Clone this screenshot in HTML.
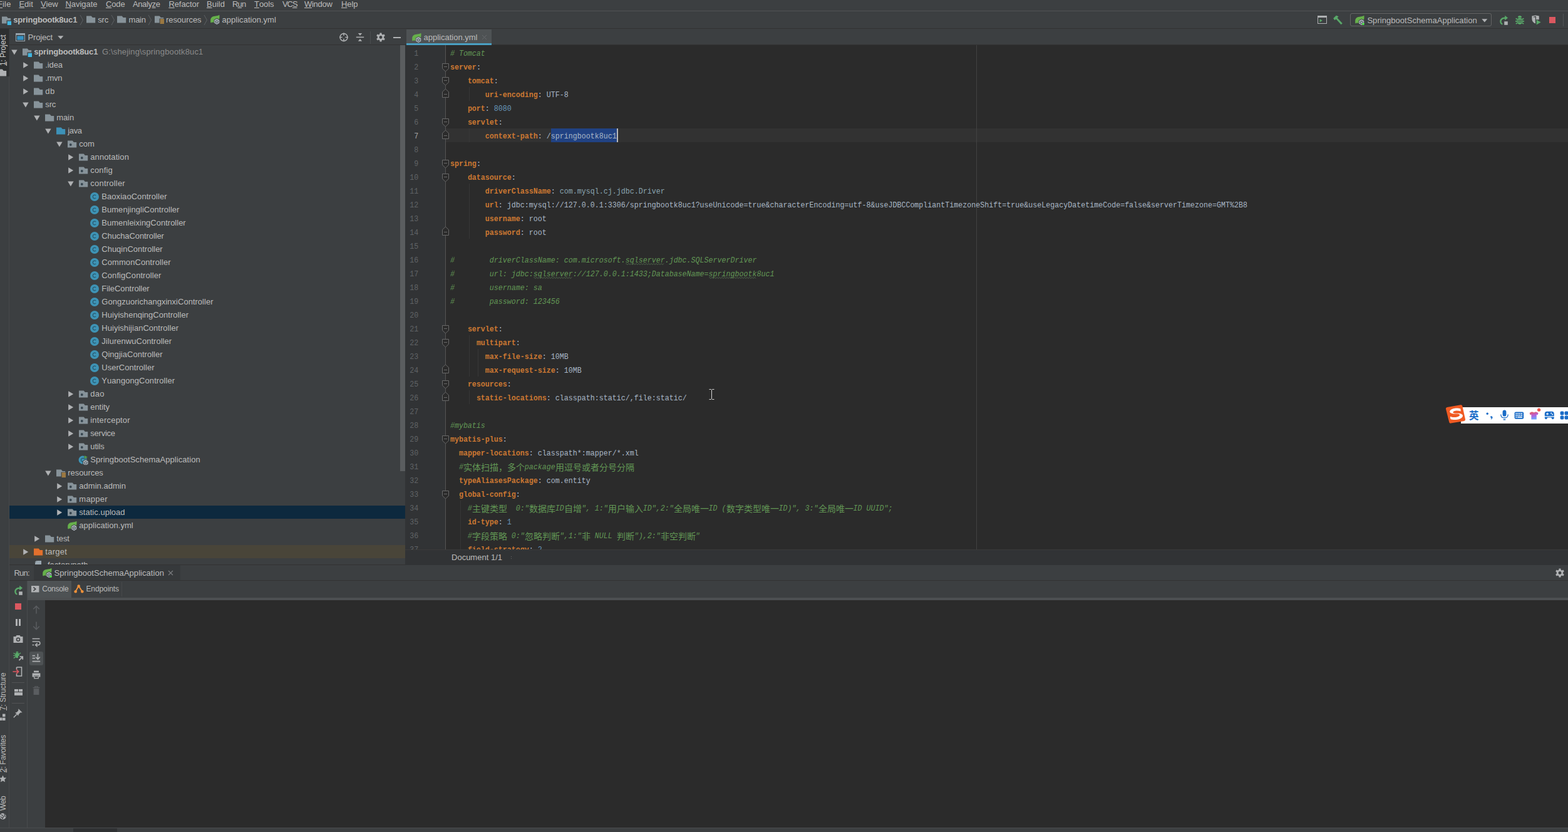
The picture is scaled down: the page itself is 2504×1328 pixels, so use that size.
<!DOCTYPE html>
<html><head><meta charset="utf-8"><title>application.yml</title><style>
html,body{margin:0;padding:0}
body{width:2504px;height:1328px;overflow:hidden;background:#2b2b2b;position:relative;font-family:"Liberation Sans",sans-serif;font-kerning:none;-webkit-font-smoothing:antialiased}
#root{position:absolute;left:0;top:0;width:2504px;height:1328px;overflow:hidden}
.r{position:absolute;display:block}
.t{position:absolute;white-space:pre;font-family:"Liberation Sans",sans-serif;color:#bbbbbb}
.t u{text-decoration:underline;text-underline-offset:1px}
.cl,.ln{position:absolute;white-space:pre;font-family:"Liberation Mono",monospace;font-size:11.665px;line-height:19.0096px;height:19.0096px;transform-origin:0 0;color:#a9b7c6}
.ln{color:#606366}
.k{color:#cc7832;font-weight:700}
.v{color:#a9b7c6}
.n{color:#6897bb}
.r2{color:#8aa4af}
.c{color:#629755;font-style:italic}
</style></head>
<body><div id="root">
<div class="r" style="left:0px;top:0px;width:2504px;height:46px;background:#3c3f41;"></div>
<div class="r" style="left:0px;top:17px;width:2504px;height:1px;background:#515355;"></div>
<div class="r" style="left:0px;top:45px;width:2504px;height:1px;background:#323232;"></div>
<span class="t" style="left:-4.00px;top:-2px;font-size:13px;line-height:17px;color:#bbbbbb;letter-spacing:0.137px;"><u>F</u>ile</span>
<span class="t" style="left:30.40px;top:-2px;font-size:13px;line-height:17px;color:#bbbbbb;letter-spacing:0.023px;"><u>E</u>dit</span>
<span class="t" style="left:65.00px;top:-2px;font-size:13px;line-height:17px;color:#bbbbbb;letter-spacing:-0.172px;"><u>V</u>iew</span>
<span class="t" style="left:104.40px;top:-2px;font-size:13px;line-height:17px;color:#bbbbbb;letter-spacing:-0.014px;"><u>N</u>avigate</span>
<span class="t" style="left:169.00px;top:-2px;font-size:13px;line-height:17px;color:#bbbbbb;letter-spacing:-0.145px;"><u>C</u>ode</span>
<span class="t" style="left:212.00px;top:-2px;font-size:13px;line-height:17px;color:#bbbbbb;letter-spacing:-0.393px;">Analy<u>z</u>e</span>
<span class="t" style="left:269.40px;top:-2px;font-size:13px;line-height:17px;color:#bbbbbb;letter-spacing:-0.080px;"><u>R</u>efactor</span>
<span class="t" style="left:330.00px;top:-2px;font-size:13px;line-height:17px;color:#bbbbbb;letter-spacing:0.016px;"><u>B</u>uild</span>
<span class="t" style="left:371.00px;top:-2px;font-size:13px;line-height:17px;color:#bbbbbb;letter-spacing:-0.786px;">R<u>u</u>n</span>
<span class="t" style="left:406.00px;top:-2px;font-size:13px;line-height:17px;color:#bbbbbb;letter-spacing:-0.059px;"><u>T</u>ools</span>
<span class="t" style="left:451.00px;top:-2px;font-size:13px;line-height:17px;color:#bbbbbb;letter-spacing:-1.078px;">VC<u>S</u></span>
<span class="t" style="left:486.00px;top:-2px;font-size:13px;line-height:17px;color:#bbbbbb;letter-spacing:-0.292px;"><u>W</u>indow</span>
<span class="t" style="left:545.00px;top:-2px;font-size:13px;line-height:17px;color:#bbbbbb;letter-spacing:-0.062px;"><u>H</u>elp</span>
<svg class="r" style="left:2px;top:24px;" width="16" height="16" viewBox="0 0 16 16"><path d="M1 2.5H8.7L10.8 5H15.2V13.5H1Z" fill="#87939a"/><rect x="8.5" y="8.5" width="8" height="8" fill="#3c3f41"/><rect x="9.7" y="9.7" width="6.3" height="6.3" fill="#40b6e0"/></svg>
<span class="t" style="left:21.30px;top:23px;font-size:13px;line-height:17px;color:#bbbbbb;font-weight:700;letter-spacing:-0.190px;">springbootk8uc1</span>
<svg class="r" style="left:127px;top:23px" width="7" height="18" viewBox="0 0 7 18"><path d="M1 1L5.5 9L1 17" fill="none" stroke="#5e6164" stroke-width="1"/></svg>
<svg class="r" style="left:136.5px;top:23px;" width="16" height="16" viewBox="0 0 16 16"><path d="M1 2.5H8.7L10.8 5H15.2V13.5H1Z" fill="#87939a"/></svg>
<span class="t" style="left:156.30px;top:23px;font-size:13px;line-height:17px;color:#bbbbbb;letter-spacing:-0.181px;">src</span>
<svg class="r" style="left:177px;top:23px" width="7" height="18" viewBox="0 0 7 18"><path d="M1 1L5.5 9L1 17" fill="none" stroke="#5e6164" stroke-width="1"/></svg>
<svg class="r" style="left:186px;top:23px;" width="16" height="16" viewBox="0 0 16 16"><path d="M1 2.5H8.7L10.8 5H15.2V13.5H1Z" fill="#87939a"/></svg>
<span class="t" style="left:205.60px;top:23px;font-size:13px;line-height:17px;color:#bbbbbb;letter-spacing:-0.297px;">main</span>
<svg class="r" style="left:236px;top:23px" width="7" height="18" viewBox="0 0 7 18"><path d="M1 1L5.5 9L1 17" fill="none" stroke="#5e6164" stroke-width="1"/></svg>
<svg class="r" style="left:246px;top:23px;" width="16" height="16" viewBox="0 0 16 16"><path d="M1 2.5H8.7L10.8 5H15.2V13.5H1Z" fill="#87939a"/><rect x="8.6" y="6.6" width="8" height="10" fill="#3c3f41"/><rect x="9.6" y="7.6" width="6.4" height="1.1" fill="#e8a842"/><rect x="9.6" y="9.6" width="6.4" height="1.1" fill="#e8a842"/><rect x="9.6" y="11.6" width="6.4" height="1.1" fill="#e8a842"/><rect x="9.6" y="13.6" width="6.4" height="1.1" fill="#e8a842"/></svg>
<span class="t" style="left:265.00px;top:23px;font-size:13px;line-height:17px;color:#bbbbbb;letter-spacing:-0.064px;">resources</span>
<svg class="r" style="left:325px;top:23px" width="7" height="18" viewBox="0 0 7 18"><path d="M1 1L5.5 9L1 17" fill="none" stroke="#5e6164" stroke-width="1"/></svg>
<svg class="r" style="left:334.7px;top:23px;" width="16" height="16" viewBox="0 0 16 16"><path d="M15.3 0.8C12 3 7.2 2.4 4.3 3.8C2.2 5 1.1 7.2 1.2 9.4L1.2 12.5L2.2 13.7C2.9 12.6 3.5 12.4 4.5 12.6C7.2 13.5 10.2 13.4 12.2 12C15 10 16.1 5 15.3 0.8Z" fill="#66b04b"/><path d="M11.30 5.90L16.06 8.65L16.06 14.15L11.30 16.90L6.54 14.15L6.54 8.65Z" fill="#3c3f41"/><path d="M11.30 6.90L15.20 9.15L15.20 13.65L11.30 15.90L7.40 13.65L7.40 9.15Z" fill="#b4bec6"/><path d="M9.8 9.9A2.2 2.2 0 1 0 12.8 9.9" fill="none" stroke="#434a50" stroke-width="1.1"/><path d="M11.3 8.7V11.6" stroke="#434a50" stroke-width="1.1"/></svg>
<span class="t" style="left:354.50px;top:23px;font-size:13px;line-height:17px;color:#bbbbbb;letter-spacing:0.027px;">application.yml</span>
<svg class="r" style="left:2104px;top:25px;" width="15" height="13" viewBox="0 0 15 13"><rect x="0.5" y="0.5" width="14" height="12" fill="none" stroke="#afb1b3"/><rect x="0.5" y="0.5" width="14" height="2.6" fill="#afb1b3"/><path d="M3.5 5.2L7.8 7.8L3.5 10.4Z" fill="#59a869"/></svg>
<svg class="r" style="left:2128px;top:24px;" width="17" height="16" viewBox="0 0 17 16"><path d="M1.2 5.2L5.8 0.8L9.6 2.2L7.6 4.4L15.8 13.2L13.6 15.2L5.6 6.4L3.4 8.2Z" fill="#59a869"/></svg>
<div class="r" style="left:2156px;top:21px;width:226px;height:21px;border:1px solid #646464;border-radius:3px;box-sizing:border-box"></div>
<svg class="r" style="left:2163px;top:24px;" width="16" height="16" viewBox="0 0 16 16"><path d="M15.3 0.8C12 3 7.2 2.4 4.3 3.8C2.2 5 1.1 7.2 1.2 9.4L1.2 12.5L2.2 13.7C2.9 12.6 3.5 12.4 4.5 12.6C7.2 13.5 10.2 13.4 12.2 12C15 10 16.1 5 15.3 0.8Z" fill="#66b04b"/><path d="M11.30 5.90L16.06 8.65L16.06 14.15L11.30 16.90L6.54 14.15L6.54 8.65Z" fill="#3c3f41"/><path d="M11.30 6.90L15.20 9.15L15.20 13.65L11.30 15.90L7.40 13.65L7.40 9.15Z" fill="#b4bec6"/><path d="M9.8 9.9A2.2 2.2 0 1 0 12.8 9.9" fill="none" stroke="#434a50" stroke-width="1.1"/><path d="M11.3 8.7V11.6" stroke="#434a50" stroke-width="1.1"/><circle cx="14" cy="14.2" r="1.8" fill="#4ff04a"/></svg>
<span class="t" style="left:2183.40px;top:24px;font-size:13px;line-height:17px;color:#bbbbbb;letter-spacing:0.045px;">SpringbootSchemaApplication</span>
<svg class="r" style="left:2366px;top:30px;" width="10" height="6" viewBox="0 0 10 6"><path d="M0.3 0.3H9.3L4.8 5.6Z" fill="#afb1b3"/></svg>
<svg class="r" style="left:2393px;top:24px;" width="16" height="16" viewBox="0 0 16 16"><path d="M10.2 0.8L15 4.6L10.2 8.4V5.9C7 5.7 4.6 7.4 4.6 10.2C4.6 12 5.6 13.3 7 14L5.8 15.6C3.6 14.6 2.2 12.7 2.2 10.2C2.2 6.2 5.6 3.4 10.2 3.4Z" fill="#59a869"/><rect x="9.2" y="10.2" width="5.6" height="5.6" fill="#afb1b3"/></svg>
<svg class="r" style="left:2418.5px;top:24px;" width="16" height="16" viewBox="0 0 16 16"><ellipse cx="8" cy="9.6" rx="4.5" ry="5.3" fill="#59a869"/><path d="M4.9 4A3.1 3.1 0 0 1 11.1 4Z" fill="#59a869"/><path d="M1.6 5.4L4.4 7M14.4 5.4L11.6 7M1 9.8H4M15 9.8H12M1.8 14L4.4 12.4M14.2 14L11.6 12.4" stroke="#59a869" stroke-width="1.7" fill="none"/><path d="M4.4 8.2H11.6M4.4 11H11.6" stroke="#3c3f41" stroke-width="1.1"/></svg>
<svg class="r" style="left:2444.5px;top:24px;" width="16" height="16" viewBox="0 0 16 16"><path d="M1.4 1.6L7.4 0.4L12.8 1.6V7.2H7V13.6C3.6 12.2 1.4 9.6 1.4 6.2Z" fill="#afb1b3"/><path d="M4 3.2L7.4 2.5V11" fill="none" stroke="#3c3f41" stroke-width="1.2"/><path d="M8.6 7.6L15.6 11.6L8.6 15.6Z" fill="#59a869"/></svg>
<div class="r" style="left:2474px;top:27px;width:10px;height:10px;background:#db5860;"></div>
<div class="r" style="left:2496px;top:22px;width:1px;height:20px;background:#515355;"></div>
<div class="r" style="left:0px;top:46px;width:15px;height:1276px;background:#3c3f41;"></div>
<div class="r" style="left:14px;top:46px;width:1px;height:1276px;background:#47494b;"></div>
<div class="r" style="left:14px;top:46px;width:1px;height:76px;background:#353739;"></div>
<div class="r" style="left:0px;top:46px;width:14px;height:76px;background:#2d2f30;"></div>
<span class="t" style="left:5.1000000000000005px;top:105.3px;color:#d0d0d0;font-size:12px;line-height:14px;letter-spacing:-0.120px;transform-origin:0 0;transform:rotate(-90deg) translateY(-7px)"><u>1</u>: Project</span>
<svg class="r" style="left:-5px;top:108.3px;" width="16" height="16" viewBox="0 0 16 16"><path d="M1 2.5H8.7L10.8 5H15.2V13.5H1Z" fill="#afb1b3"/></svg>
<span class="t" style="left:5.1000000000000005px;top:1134px;color:#bbbbbb;font-size:12px;line-height:14px;letter-spacing:-0.144px;transform-origin:0 0;transform:rotate(-90deg) translateY(-7px)"><u>7</u>: Structure</span>
<svg class="r" style="left:0px;top:1139px;" width="10" height="12" viewBox="0 0 10 12"><rect x="4" y="0.5" width="4.5" height="4.5" fill="#afb1b3"/><rect x="-1" y="6.5" width="4.5" height="4.5" fill="#afb1b3"/><rect x="4" y="6.5" width="4.5" height="4.5" fill="#afb1b3"/></svg>
<span class="t" style="left:5.1000000000000005px;top:1233.2px;color:#bbbbbb;font-size:12px;line-height:14px;letter-spacing:-0.242px;transform-origin:0 0;transform:rotate(-90deg) translateY(-7px)"><u>2</u>: Favorites</span>
<svg class="r" style="left:0px;top:1237px;" width="11" height="12" viewBox="0 0 11 12"><path d="M4.5 0.5L6.2 4.2L10.2 4.6L7.2 7.3L8.1 11.3L4.5 9.2L0.9 11.3L1.8 7.3L-1.2 4.6L2.8 4.2Z" fill="#afb1b3"/></svg>
<span class="t" style="left:5.1000000000000005px;top:1294px;color:#bbbbbb;font-size:12px;line-height:14px;letter-spacing:-0.496px;transform-origin:0 0;transform:rotate(-90deg) translateY(-7px)">Web</span>
<svg class="r" style="left:0px;top:1297px;" width="11" height="12" viewBox="0 0 11 12"><circle cx="4.6" cy="6" r="5" fill="#afb1b3"/><path d="M1.5 3.4L4 4.2L5.6 6.8L4 9.6L2.6 7.4L0.6 6.6M6 1.6L8 3.4L7 5.4L8.8 6.4" fill="none" stroke="#3c3f41" stroke-width="1.1"/></svg>
<div class="r" style="left:15px;top:46px;width:632px;height:856px;background:#3c3f41;"></div>
<div class="r" style="left:15px;top:71px;width:632px;height:1px;background:#323232;"></div>
<svg class="r" style="left:25px;top:53px;" width="15" height="13" viewBox="0 0 15 13"><rect x="0.5" y="0.5" width="14" height="12" fill="none" stroke="#9aa7b0"/><rect x="0.5" y="0.5" width="14" height="2.4" fill="#9aa7b0"/><rect x="2.3" y="4.4" width="10.4" height="6.4" fill="#3592c4"/></svg>
<span class="t" style="left:44.40px;top:51px;font-size:13px;line-height:17px;color:#bbbbbb;letter-spacing:-0.124px;">Project</span>
<svg class="r" style="left:92px;top:57px;" width="10" height="6" viewBox="0 0 10 6"><path d="M0.2 0.3H9.4L4.8 5.6Z" fill="#afb1b3"/></svg>
<svg class="r" style="left:541px;top:52px;" width="16" height="16" viewBox="0 0 16 16"><circle cx="8" cy="7.4" r="6" fill="none" stroke="#afb1b3" stroke-width="1.5"/><path d="M8 0.6V5M8 9.8V14.2M1.2 7.4H5.6M10.4 7.4H14.8" stroke="#afb1b3" stroke-width="1.5"/></svg>
<svg class="r" style="left:568px;top:52px;" width="14" height="16" viewBox="0 0 14 16"><path d="M0.8 7.4H13.2" stroke="#afb1b3" stroke-width="1.5"/><path d="M3.8 1H10.2L7 4.8Z M3.8 13.8H10.2L7 10Z" fill="#afb1b3"/></svg>
<div class="r" style="left:591px;top:50px;width:1px;height:20px;background:#4b4d4f;"></div>
<svg class="r" style="left:600px;top:52px;" width="16" height="16" viewBox="0 0 16 16"><path d="M6.6 0.6H9.4L9.8 2.7L11.3 3.5L13.3 2.6L14.8 5L13.1 6.4V8.6L14.8 10L13.3 12.4L11.3 11.5L9.8 12.3L9.4 14.4H6.6L6.2 12.3L4.7 11.5L2.7 12.4L1.2 10L2.9 8.6V6.4L1.2 5L2.7 2.6L4.7 3.5L6.2 2.7Z" fill="#afb1b3"/><circle cx="8" cy="7.5" r="2.4" fill="#3c3f41"/></svg>
<div class="r" style="left:628px;top:59px;width:12px;height:2px;background:#afb1b3;"></div>
<svg class="r" style="left:17.5px;top:78.5px" width="10" height="9" viewBox="0 0 10 9"><path d="M0.2 0.4H9.6L4.9 8.6Z" fill="#afb1b3"/></svg>
<svg class="r" style="left:35px;top:74.5px;" width="16" height="16" viewBox="0 0 16 16"><path d="M1 2.5H8.7L10.8 5H15.2V13.5H1Z" fill="#87939a"/><rect x="8.5" y="8.5" width="8" height="8" fill="#3c3f41"/><rect x="9.7" y="9.7" width="6.3" height="6.3" fill="#40b6e0"/></svg>
<span class="t" style="left:54.30px;top:74px;font-size:13px;line-height:17px;color:#bbbbbb;font-weight:700;letter-spacing:-0.190px;">springbootk8uc1</span>
<span class="t" style="left:163.00px;top:74px;font-size:13px;line-height:17px;color:#8a8a8a;letter-spacing:0.152px;">G:\shejing\springbootk8uc1</span>
<svg class="r" style="left:37px;top:98.5px" width="9" height="10" viewBox="0 0 9 10"><path d="M0.2 0.3L8.2 5L0.2 9.7Z" fill="#afb1b3"/></svg>
<svg class="r" style="left:53px;top:95.5px;" width="16" height="16" viewBox="0 0 16 16"><path d="M1 2.5H8.7L10.8 5H15.2V13.5H1Z" fill="#87939a"/></svg>
<span class="t" style="left:72.30px;top:95px;font-size:13px;line-height:17px;color:#bbbbbb;letter-spacing:-0.101px;">.idea</span>
<svg class="r" style="left:37px;top:119.5px" width="9" height="10" viewBox="0 0 9 10"><path d="M0.2 0.3L8.2 5L0.2 9.7Z" fill="#afb1b3"/></svg>
<svg class="r" style="left:53px;top:116.5px;" width="16" height="16" viewBox="0 0 16 16"><path d="M1 2.5H8.7L10.8 5H15.2V13.5H1Z" fill="#87939a"/></svg>
<span class="t" style="left:72.30px;top:116px;font-size:13px;line-height:17px;color:#bbbbbb;letter-spacing:-0.318px;">.mvn</span>
<svg class="r" style="left:37px;top:140.5px" width="9" height="10" viewBox="0 0 9 10"><path d="M0.2 0.3L8.2 5L0.2 9.7Z" fill="#afb1b3"/></svg>
<svg class="r" style="left:53px;top:137.5px;" width="16" height="16" viewBox="0 0 16 16"><path d="M1 2.5H8.7L10.8 5H15.2V13.5H1Z" fill="#87939a"/></svg>
<span class="t" style="left:72.30px;top:137px;font-size:13px;line-height:17px;color:#bbbbbb;letter-spacing:0.516px;">db</span>
<svg class="r" style="left:35.5px;top:162.5px" width="10" height="9" viewBox="0 0 10 9"><path d="M0.2 0.4H9.6L4.9 8.6Z" fill="#afb1b3"/></svg>
<svg class="r" style="left:53px;top:158.5px;" width="16" height="16" viewBox="0 0 16 16"><path d="M1 2.5H8.7L10.8 5H15.2V13.5H1Z" fill="#87939a"/></svg>
<span class="t" style="left:72.30px;top:158px;font-size:13px;line-height:17px;color:#bbbbbb;letter-spacing:-0.148px;">src</span>
<svg class="r" style="left:53.5px;top:183.5px" width="10" height="9" viewBox="0 0 10 9"><path d="M0.2 0.4H9.6L4.9 8.6Z" fill="#afb1b3"/></svg>
<svg class="r" style="left:71px;top:179.5px;" width="16" height="16" viewBox="0 0 16 16"><path d="M1 2.5H8.7L10.8 5H15.2V13.5H1Z" fill="#87939a"/></svg>
<span class="t" style="left:90.30px;top:179px;font-size:13px;line-height:17px;color:#bbbbbb;letter-spacing:-0.122px;">main</span>
<svg class="r" style="left:71.5px;top:204.5px" width="10" height="9" viewBox="0 0 10 9"><path d="M0.2 0.4H9.6L4.9 8.6Z" fill="#afb1b3"/></svg>
<svg class="r" style="left:89px;top:200.5px;" width="16" height="16" viewBox="0 0 16 16"><path d="M1 2.5H8.7L10.8 5H15.2V13.5H1Z" fill="#3d91b8"/></svg>
<span class="t" style="left:108.30px;top:200px;font-size:13px;line-height:17px;color:#bbbbbb;letter-spacing:-0.365px;">java</span>
<svg class="r" style="left:89.5px;top:225.5px" width="10" height="9" viewBox="0 0 10 9"><path d="M0.2 0.4H9.6L4.9 8.6Z" fill="#afb1b3"/></svg>
<svg class="r" style="left:107px;top:221.5px;" width="16" height="16" viewBox="0 0 16 16"><path d="M1 2.5H8.7L10.8 5H15.2V13.5H1Z" fill="#87939a"/><circle cx="5.8" cy="9" r="1.9" fill="#36444e"/></svg>
<span class="t" style="left:126.30px;top:221px;font-size:13px;line-height:17px;color:#bbbbbb;letter-spacing:-0.021px;">com</span>
<svg class="r" style="left:109px;top:245.5px" width="9" height="10" viewBox="0 0 9 10"><path d="M0.2 0.3L8.2 5L0.2 9.7Z" fill="#afb1b3"/></svg>
<svg class="r" style="left:125px;top:242.5px;" width="16" height="16" viewBox="0 0 16 16"><path d="M1 2.5H8.7L10.8 5H15.2V13.5H1Z" fill="#87939a"/><circle cx="5.8" cy="9" r="1.9" fill="#36444e"/></svg>
<span class="t" style="left:144.30px;top:242px;font-size:13px;line-height:17px;color:#bbbbbb;letter-spacing:0.097px;">annotation</span>
<svg class="r" style="left:109px;top:266.5px" width="9" height="10" viewBox="0 0 9 10"><path d="M0.2 0.3L8.2 5L0.2 9.7Z" fill="#afb1b3"/></svg>
<svg class="r" style="left:125px;top:263.5px;" width="16" height="16" viewBox="0 0 16 16"><path d="M1 2.5H8.7L10.8 5H15.2V13.5H1Z" fill="#87939a"/><circle cx="5.8" cy="9" r="1.9" fill="#36444e"/></svg>
<span class="t" style="left:144.30px;top:263px;font-size:13px;line-height:17px;color:#bbbbbb;letter-spacing:0.149px;">config</span>
<svg class="r" style="left:107.5px;top:288.5px" width="10" height="9" viewBox="0 0 10 9"><path d="M0.2 0.4H9.6L4.9 8.6Z" fill="#afb1b3"/></svg>
<svg class="r" style="left:125px;top:284.5px;" width="16" height="16" viewBox="0 0 16 16"><path d="M1 2.5H8.7L10.8 5H15.2V13.5H1Z" fill="#87939a"/><circle cx="5.8" cy="9" r="1.9" fill="#36444e"/></svg>
<span class="t" style="left:144.30px;top:284px;font-size:13px;line-height:17px;color:#bbbbbb;letter-spacing:0.213px;">controller</span>
<svg class="r" style="left:143px;top:305.5px;" width="16" height="16" viewBox="0 0 16 16"><circle cx="8" cy="8" r="7" fill="#3e94b6"/><path d="M10.1 6.1A2.8 2.8 0 1 0 10.1 9.9" fill="none" stroke="#2a5a70" stroke-width="1.25"/></svg>
<span class="t" style="left:162.30px;top:305px;font-size:13px;line-height:17px;color:#bbbbbb;letter-spacing:0.056px;">BaoxiaoController</span>
<svg class="r" style="left:143px;top:326.5px;" width="16" height="16" viewBox="0 0 16 16"><circle cx="8" cy="8" r="7" fill="#3e94b6"/><path d="M10.1 6.1A2.8 2.8 0 1 0 10.1 9.9" fill="none" stroke="#2a5a70" stroke-width="1.25"/></svg>
<span class="t" style="left:162.30px;top:326px;font-size:13px;line-height:17px;color:#bbbbbb;letter-spacing:0.030px;">BumenjingliController</span>
<svg class="r" style="left:143px;top:347.5px;" width="16" height="16" viewBox="0 0 16 16"><circle cx="8" cy="8" r="7" fill="#3e94b6"/><path d="M10.1 6.1A2.8 2.8 0 1 0 10.1 9.9" fill="none" stroke="#2a5a70" stroke-width="1.25"/></svg>
<span class="t" style="left:162.30px;top:347px;font-size:13px;line-height:17px;color:#bbbbbb;">BumenleixingController</span>
<svg class="r" style="left:143px;top:368.5px;" width="16" height="16" viewBox="0 0 16 16"><circle cx="8" cy="8" r="7" fill="#3e94b6"/><path d="M10.1 6.1A2.8 2.8 0 1 0 10.1 9.9" fill="none" stroke="#2a5a70" stroke-width="1.25"/></svg>
<span class="t" style="left:162.30px;top:368px;font-size:13px;line-height:17px;color:#bbbbbb;letter-spacing:-0.104px;">ChuchaController</span>
<svg class="r" style="left:143px;top:389.5px;" width="16" height="16" viewBox="0 0 16 16"><circle cx="8" cy="8" r="7" fill="#3e94b6"/><path d="M10.1 6.1A2.8 2.8 0 1 0 10.1 9.9" fill="none" stroke="#2a5a70" stroke-width="1.25"/></svg>
<span class="t" style="left:162.30px;top:389px;font-size:13px;line-height:17px;color:#bbbbbb;letter-spacing:-0.010px;">ChuqinController</span>
<svg class="r" style="left:143px;top:410.5px;" width="16" height="16" viewBox="0 0 16 16"><circle cx="8" cy="8" r="7" fill="#3e94b6"/><path d="M10.1 6.1A2.8 2.8 0 1 0 10.1 9.9" fill="none" stroke="#2a5a70" stroke-width="1.25"/></svg>
<span class="t" style="left:162.30px;top:410px;font-size:13px;line-height:17px;color:#bbbbbb;letter-spacing:0.075px;">CommonController</span>
<svg class="r" style="left:143px;top:431.5px;" width="16" height="16" viewBox="0 0 16 16"><circle cx="8" cy="8" r="7" fill="#3e94b6"/><path d="M10.1 6.1A2.8 2.8 0 1 0 10.1 9.9" fill="none" stroke="#2a5a70" stroke-width="1.25"/></svg>
<span class="t" style="left:162.30px;top:431px;font-size:13px;line-height:17px;color:#bbbbbb;letter-spacing:0.079px;">ConfigController</span>
<svg class="r" style="left:143px;top:452.5px;" width="16" height="16" viewBox="0 0 16 16"><circle cx="8" cy="8" r="7" fill="#3e94b6"/><path d="M10.1 6.1A2.8 2.8 0 1 0 10.1 9.9" fill="none" stroke="#2a5a70" stroke-width="1.25"/></svg>
<span class="t" style="left:162.30px;top:452px;font-size:13px;line-height:17px;color:#bbbbbb;letter-spacing:-0.072px;">FileController</span>
<svg class="r" style="left:143px;top:473.5px;" width="16" height="16" viewBox="0 0 16 16"><circle cx="8" cy="8" r="7" fill="#3e94b6"/><path d="M10.1 6.1A2.8 2.8 0 1 0 10.1 9.9" fill="none" stroke="#2a5a70" stroke-width="1.25"/></svg>
<span class="t" style="left:162.30px;top:473px;font-size:13px;line-height:17px;color:#bbbbbb;letter-spacing:0.015px;">GongzuorichangxinxiController</span>
<svg class="r" style="left:143px;top:494.5px;" width="16" height="16" viewBox="0 0 16 16"><circle cx="8" cy="8" r="7" fill="#3e94b6"/><path d="M10.1 6.1A2.8 2.8 0 1 0 10.1 9.9" fill="none" stroke="#2a5a70" stroke-width="1.25"/></svg>
<span class="t" style="left:162.30px;top:494px;font-size:13px;line-height:17px;color:#bbbbbb;letter-spacing:0.030px;">HuiyishenqingController</span>
<svg class="r" style="left:143px;top:515.5px;" width="16" height="16" viewBox="0 0 16 16"><circle cx="8" cy="8" r="7" fill="#3e94b6"/><path d="M10.1 6.1A2.8 2.8 0 1 0 10.1 9.9" fill="none" stroke="#2a5a70" stroke-width="1.25"/></svg>
<span class="t" style="left:162.30px;top:515px;font-size:13px;line-height:17px;color:#bbbbbb;letter-spacing:0.030px;">HuiyishijianController</span>
<svg class="r" style="left:143px;top:536.5px;" width="16" height="16" viewBox="0 0 16 16"><circle cx="8" cy="8" r="7" fill="#3e94b6"/><path d="M10.1 6.1A2.8 2.8 0 1 0 10.1 9.9" fill="none" stroke="#2a5a70" stroke-width="1.25"/></svg>
<span class="t" style="left:162.30px;top:536px;font-size:13px;line-height:17px;color:#bbbbbb;letter-spacing:0.030px;">JilurenwuController</span>
<svg class="r" style="left:143px;top:557.5px;" width="16" height="16" viewBox="0 0 16 16"><circle cx="8" cy="8" r="7" fill="#3e94b6"/><path d="M10.1 6.1A2.8 2.8 0 1 0 10.1 9.9" fill="none" stroke="#2a5a70" stroke-width="1.25"/></svg>
<span class="t" style="left:162.30px;top:557px;font-size:13px;line-height:17px;color:#bbbbbb;letter-spacing:0.030px;">QingjiaController</span>
<svg class="r" style="left:143px;top:578.5px;" width="16" height="16" viewBox="0 0 16 16"><circle cx="8" cy="8" r="7" fill="#3e94b6"/><path d="M10.1 6.1A2.8 2.8 0 1 0 10.1 9.9" fill="none" stroke="#2a5a70" stroke-width="1.25"/></svg>
<span class="t" style="left:162.30px;top:578px;font-size:13px;line-height:17px;color:#bbbbbb;letter-spacing:0.030px;">UserController</span>
<svg class="r" style="left:143px;top:599.5px;" width="16" height="16" viewBox="0 0 16 16"><circle cx="8" cy="8" r="7" fill="#3e94b6"/><path d="M10.1 6.1A2.8 2.8 0 1 0 10.1 9.9" fill="none" stroke="#2a5a70" stroke-width="1.25"/></svg>
<span class="t" style="left:162.30px;top:599px;font-size:13px;line-height:17px;color:#bbbbbb;letter-spacing:0.064px;">YuangongController</span>
<svg class="r" style="left:109px;top:623.5px" width="9" height="10" viewBox="0 0 9 10"><path d="M0.2 0.3L8.2 5L0.2 9.7Z" fill="#afb1b3"/></svg>
<svg class="r" style="left:125px;top:620.5px;" width="16" height="16" viewBox="0 0 16 16"><path d="M1 2.5H8.7L10.8 5H15.2V13.5H1Z" fill="#87939a"/><circle cx="5.8" cy="9" r="1.9" fill="#36444e"/></svg>
<span class="t" style="left:144.30px;top:620px;font-size:13px;line-height:17px;color:#bbbbbb;letter-spacing:0.232px;">dao</span>
<svg class="r" style="left:109px;top:644.5px" width="9" height="10" viewBox="0 0 9 10"><path d="M0.2 0.3L8.2 5L0.2 9.7Z" fill="#afb1b3"/></svg>
<svg class="r" style="left:125px;top:641.5px;" width="16" height="16" viewBox="0 0 16 16"><path d="M1 2.5H8.7L10.8 5H15.2V13.5H1Z" fill="#87939a"/><circle cx="5.8" cy="9" r="1.9" fill="#36444e"/></svg>
<span class="t" style="left:144.30px;top:641px;font-size:13px;line-height:17px;color:#bbbbbb;letter-spacing:-0.080px;">entity</span>
<svg class="r" style="left:109px;top:665.5px" width="9" height="10" viewBox="0 0 9 10"><path d="M0.2 0.3L8.2 5L0.2 9.7Z" fill="#afb1b3"/></svg>
<svg class="r" style="left:125px;top:662.5px;" width="16" height="16" viewBox="0 0 16 16"><path d="M1 2.5H8.7L10.8 5H15.2V13.5H1Z" fill="#87939a"/><circle cx="5.8" cy="9" r="1.9" fill="#36444e"/></svg>
<span class="t" style="left:144.30px;top:662px;font-size:13px;line-height:17px;color:#bbbbbb;letter-spacing:0.189px;">interceptor</span>
<svg class="r" style="left:109px;top:686.5px" width="9" height="10" viewBox="0 0 9 10"><path d="M0.2 0.3L8.2 5L0.2 9.7Z" fill="#afb1b3"/></svg>
<svg class="r" style="left:125px;top:683.5px;" width="16" height="16" viewBox="0 0 16 16"><path d="M1 2.5H8.7L10.8 5H15.2V13.5H1Z" fill="#87939a"/><circle cx="5.8" cy="9" r="1.9" fill="#36444e"/></svg>
<span class="t" style="left:144.30px;top:683px;font-size:13px;line-height:17px;color:#bbbbbb;letter-spacing:-0.241px;">service</span>
<svg class="r" style="left:109px;top:707.5px" width="9" height="10" viewBox="0 0 9 10"><path d="M0.2 0.3L8.2 5L0.2 9.7Z" fill="#afb1b3"/></svg>
<svg class="r" style="left:125px;top:704.5px;" width="16" height="16" viewBox="0 0 16 16"><path d="M1 2.5H8.7L10.8 5H15.2V13.5H1Z" fill="#87939a"/><circle cx="5.8" cy="9" r="1.9" fill="#36444e"/></svg>
<span class="t" style="left:144.30px;top:704px;font-size:13px;line-height:17px;color:#bbbbbb;letter-spacing:-0.145px;">utils</span>
<svg class="r" style="left:125px;top:725.5px;" width="16" height="16" viewBox="0 0 16 16"><circle cx="7.2" cy="8.2" r="6.6" fill="#3e94b6"/><path d="M9.3 6.299999999999999A2.8 2.8 0 1 0 9.3 10.1" fill="none" stroke="#2a5a70" stroke-width="1.25"/><path d="M9.8 0.8L15.4 3.7L9.8 6.6Z" fill="#57a64a" stroke="#3c3f41" stroke-width="0.6"/><path d="M11.80 7.00L16.48 9.70L16.48 15.10L11.80 17.80L7.12 15.10L7.12 9.70Z" fill="#3c3f41"/><path d="M11.80 8.00L15.61 10.20L15.61 14.60L11.80 16.80L7.99 14.60L7.99 10.20Z" fill="#b4bec6"/><path d="M10.3 10.9A2.2 2.2 0 1 0 13.3 10.9" fill="none" stroke="#434a50" stroke-width="1.1"/><path d="M11.8 9.7V12.6" stroke="#434a50" stroke-width="1.1"/></svg>
<span class="t" style="left:144.30px;top:725px;font-size:13px;line-height:17px;color:#bbbbbb;letter-spacing:0.045px;">SpringbootSchemaApplication</span>
<svg class="r" style="left:71.5px;top:750.5px" width="10" height="9" viewBox="0 0 10 9"><path d="M0.2 0.4H9.6L4.9 8.6Z" fill="#afb1b3"/></svg>
<svg class="r" style="left:89px;top:746.5px;" width="16" height="16" viewBox="0 0 16 16"><path d="M1 2.5H8.7L10.8 5H15.2V13.5H1Z" fill="#87939a"/><rect x="8.6" y="6.6" width="8" height="10" fill="#3c3f41"/><rect x="9.6" y="7.6" width="6.4" height="1.1" fill="#e8a842"/><rect x="9.6" y="9.6" width="6.4" height="1.1" fill="#e8a842"/><rect x="9.6" y="11.6" width="6.4" height="1.1" fill="#e8a842"/><rect x="9.6" y="13.6" width="6.4" height="1.1" fill="#e8a842"/></svg>
<span class="t" style="left:108.30px;top:746px;font-size:13px;line-height:17px;color:#bbbbbb;letter-spacing:-0.064px;">resources</span>
<svg class="r" style="left:91px;top:770.5px" width="9" height="10" viewBox="0 0 9 10"><path d="M0.2 0.3L8.2 5L0.2 9.7Z" fill="#afb1b3"/></svg>
<svg class="r" style="left:107px;top:767.5px;" width="16" height="16" viewBox="0 0 16 16"><path d="M1 2.5H8.7L10.8 5H15.2V13.5H1Z" fill="#87939a"/><circle cx="5.8" cy="9" r="1.9" fill="#36444e"/></svg>
<span class="t" style="left:126.30px;top:767px;font-size:13px;line-height:17px;color:#bbbbbb;letter-spacing:0.015px;">admin.admin</span>
<svg class="r" style="left:91px;top:791.5px" width="9" height="10" viewBox="0 0 9 10"><path d="M0.2 0.3L8.2 5L0.2 9.7Z" fill="#afb1b3"/></svg>
<svg class="r" style="left:107px;top:788.5px;" width="16" height="16" viewBox="0 0 16 16"><path d="M1 2.5H8.7L10.8 5H15.2V13.5H1Z" fill="#87939a"/><circle cx="5.8" cy="9" r="1.9" fill="#36444e"/></svg>
<span class="t" style="left:126.30px;top:788px;font-size:13px;line-height:17px;color:#bbbbbb;letter-spacing:0.254px;">mapper</span>
<div class="r" style="left:15px;top:807px;width:632px;height:21px;background:#0d293e;"></div>
<svg class="r" style="left:91px;top:812.5px" width="9" height="10" viewBox="0 0 9 10"><path d="M0.2 0.3L8.2 5L0.2 9.7Z" fill="#afb1b3"/></svg>
<svg class="r" style="left:107px;top:809.5px;" width="16" height="16" viewBox="0 0 16 16"><path d="M1 2.5H8.7L10.8 5H15.2V13.5H1Z" fill="#87939a"/><circle cx="5.8" cy="9" r="1.9" fill="#36444e"/></svg>
<span class="t" style="left:126.30px;top:809px;font-size:13px;line-height:17px;color:#bbbbbb;letter-spacing:0.023px;">static.upload</span>
<svg class="r" style="left:107px;top:830.5px;" width="16" height="16" viewBox="0 0 16 16"><path d="M15.3 0.8C12 3 7.2 2.4 4.3 3.8C2.2 5 1.1 7.2 1.2 9.4L1.2 12.5L2.2 13.7C2.9 12.6 3.5 12.4 4.5 12.6C7.2 13.5 10.2 13.4 12.2 12C15 10 16.1 5 15.3 0.8Z" fill="#66b04b"/><path d="M11.30 5.90L16.06 8.65L16.06 14.15L11.30 16.90L6.54 14.15L6.54 8.65Z" fill="#3c3f41"/><path d="M11.30 6.90L15.20 9.15L15.20 13.65L11.30 15.90L7.40 13.65L7.40 9.15Z" fill="#b4bec6"/><path d="M9.8 9.9A2.2 2.2 0 1 0 12.8 9.9" fill="none" stroke="#434a50" stroke-width="1.1"/><path d="M11.3 8.7V11.6" stroke="#434a50" stroke-width="1.1"/></svg>
<span class="t" style="left:126.30px;top:830px;font-size:13px;line-height:17px;color:#bbbbbb;letter-spacing:0.027px;">application.yml</span>
<svg class="r" style="left:55px;top:854.5px" width="9" height="10" viewBox="0 0 9 10"><path d="M0.2 0.3L8.2 5L0.2 9.7Z" fill="#afb1b3"/></svg>
<svg class="r" style="left:71px;top:851.5px;" width="16" height="16" viewBox="0 0 16 16"><path d="M1 2.5H8.7L10.8 5H15.2V13.5H1Z" fill="#87939a"/></svg>
<span class="t" style="left:90.30px;top:851px;font-size:13px;line-height:17px;color:#bbbbbb;letter-spacing:-0.092px;">test</span>
<div class="r" style="left:15px;top:870px;width:632px;height:21px;background:#494539;"></div>
<svg class="r" style="left:37px;top:875.5px" width="9" height="10" viewBox="0 0 9 10"><path d="M0.2 0.3L8.2 5L0.2 9.7Z" fill="#afb1b3"/></svg>
<svg class="r" style="left:53px;top:872.5px;" width="16" height="16" viewBox="0 0 16 16"><path d="M1 2.5H8.7L10.8 5H15.2V13.5H1Z" fill="#e1702d"/></svg>
<span class="t" style="left:72.30px;top:872px;font-size:13px;line-height:17px;color:#bbbbbb;letter-spacing:0.258px;">target</span>
<svg class="r" style="left:53px;top:893.5px;" width="16" height="16" viewBox="0 0 16 16"><path d="M6.5 1H13V15H3V4.5Z" fill="#9aa7b0"/><path d="M2.4 3.6L5.6 0.4V3.6Z" fill="#9aa7b0"/></svg>
<span class="t" style="left:72.30px;top:893px;font-size:13px;line-height:17px;color:#bbbbbb;letter-spacing:0.030px;">.factorypath</span>
<div class="r" style="left:639px;top:72px;width:8px;height:680px;background:#5a5d5f;"></div>
<div class="r" style="left:15px;top:901px;width:632px;height:1px;background:#323232;"></div>
<div class="r" style="left:647px;top:46px;width:1857px;height:26px;background:#3c3f41;"></div>
<div class="r" style="left:647px;top:71px;width:1857px;height:1px;background:#323232;"></div>
<div class="r" style="left:649px;top:47px;width:136px;height:25px;background:#4e5254;"></div>
<div class="r" style="left:649px;top:69px;width:136px;height:3px;background:#4a9fc2;"></div>
<svg class="r" style="left:657px;top:52px;" width="16" height="16" viewBox="0 0 16 16"><path d="M15.3 0.8C12 3 7.2 2.4 4.3 3.8C2.2 5 1.1 7.2 1.2 9.4L1.2 12.5L2.2 13.7C2.9 12.6 3.5 12.4 4.5 12.6C7.2 13.5 10.2 13.4 12.2 12C15 10 16.1 5 15.3 0.8Z" fill="#66b04b"/><path d="M11.30 5.90L16.06 8.65L16.06 14.15L11.30 16.90L6.54 14.15L6.54 8.65Z" fill="#4e5254"/><path d="M11.30 6.90L15.20 9.15L15.20 13.65L11.30 15.90L7.40 13.65L7.40 9.15Z" fill="#b4bec6"/><path d="M9.8 9.9A2.2 2.2 0 1 0 12.8 9.9" fill="none" stroke="#434a50" stroke-width="1.1"/><path d="M11.3 8.7V11.6" stroke="#434a50" stroke-width="1.1"/></svg>
<span class="t" style="left:676.50px;top:51px;font-size:13px;line-height:17px;color:#bbbbbb;">application.yml</span>
<svg class="r" style="left:769px;top:55px;" width="9" height="9" viewBox="0 0 9 9"><path d="M1 1L8 8M8 1L1 8" stroke="#65686b" stroke-width="1"/></svg>
<div class="r" style="left:647px;top:72px;width:1857px;height:806px;background:#2b2b2b;"></div>
<div class="r" style="left:647px;top:72px;width:64px;height:806px;background:#313335;"></div>
<div class="r" style="left:712px;top:205px;width:1792px;height:22px;background:#323232;"></div>
<div class="r" style="left:1559px;top:72px;width:1px;height:806px;background:#424242;"></div>
<div class="r" style="left:711px;top:72px;width:1px;height:806px;background:#555555;"></div>
<svg class="r" style="left:705px;top:100px;" width="13" height="16" viewBox="0 0 13 16"><path d="M1.5 1.5H11.5V9.4L6.5 14L1.5 9.4Z" fill="#2b2b2b" stroke="#686868" stroke-width="1"/><path d="M4 6.5H9" stroke="#686868" stroke-width="1"/></svg>
<svg class="r" style="left:705px;top:122px;" width="13" height="16" viewBox="0 0 13 16"><path d="M1.5 1.5H11.5V9.4L6.5 14L1.5 9.4Z" fill="#2b2b2b" stroke="#686868" stroke-width="1"/><path d="M4 6.5H9" stroke="#686868" stroke-width="1"/></svg>
<svg class="r" style="left:705px;top:188px;" width="13" height="16" viewBox="0 0 13 16"><path d="M1.5 1.5H11.5V9.4L6.5 14L1.5 9.4Z" fill="#2b2b2b" stroke="#686868" stroke-width="1"/><path d="M4 6.5H9" stroke="#686868" stroke-width="1"/></svg>
<svg class="r" style="left:705px;top:254px;" width="13" height="16" viewBox="0 0 13 16"><path d="M1.5 1.5H11.5V9.4L6.5 14L1.5 9.4Z" fill="#2b2b2b" stroke="#686868" stroke-width="1"/><path d="M4 6.5H9" stroke="#686868" stroke-width="1"/></svg>
<svg class="r" style="left:705px;top:276px;" width="13" height="16" viewBox="0 0 13 16"><path d="M1.5 1.5H11.5V9.4L6.5 14L1.5 9.4Z" fill="#2b2b2b" stroke="#686868" stroke-width="1"/><path d="M4 6.5H9" stroke="#686868" stroke-width="1"/></svg>
<svg class="r" style="left:705px;top:518px;" width="13" height="16" viewBox="0 0 13 16"><path d="M1.5 1.5H11.5V9.4L6.5 14L1.5 9.4Z" fill="#2b2b2b" stroke="#686868" stroke-width="1"/><path d="M4 6.5H9" stroke="#686868" stroke-width="1"/></svg>
<svg class="r" style="left:705px;top:540px;" width="13" height="16" viewBox="0 0 13 16"><path d="M1.5 1.5H11.5V9.4L6.5 14L1.5 9.4Z" fill="#2b2b2b" stroke="#686868" stroke-width="1"/><path d="M4 6.5H9" stroke="#686868" stroke-width="1"/></svg>
<svg class="r" style="left:705px;top:606px;" width="13" height="16" viewBox="0 0 13 16"><path d="M1.5 1.5H11.5V9.4L6.5 14L1.5 9.4Z" fill="#2b2b2b" stroke="#686868" stroke-width="1"/><path d="M4 6.5H9" stroke="#686868" stroke-width="1"/></svg>
<svg class="r" style="left:705px;top:694px;" width="13" height="16" viewBox="0 0 13 16"><path d="M1.5 1.5H11.5V9.4L6.5 14L1.5 9.4Z" fill="#2b2b2b" stroke="#686868" stroke-width="1"/><path d="M4 6.5H9" stroke="#686868" stroke-width="1"/></svg>
<svg class="r" style="left:705px;top:782px;" width="13" height="16" viewBox="0 0 13 16"><path d="M1.5 1.5H11.5V9.4L6.5 14L1.5 9.4Z" fill="#2b2b2b" stroke="#686868" stroke-width="1"/><path d="M4 6.5H9" stroke="#686868" stroke-width="1"/></svg>
<svg class="r" style="left:705px;top:141px;" width="13" height="16" viewBox="0 0 13 16"><path d="M1.5 14.5H11.5V5.6L6.5 1L1.5 5.6Z" fill="#2b2b2b" stroke="#686868" stroke-width="1"/><path d="M4 9.5H9" stroke="#686868" stroke-width="1"/></svg>
<svg class="r" style="left:705px;top:361px;" width="13" height="16" viewBox="0 0 13 16"><path d="M1.5 14.5H11.5V5.6L6.5 1L1.5 5.6Z" fill="#2b2b2b" stroke="#686868" stroke-width="1"/><path d="M4 9.5H9" stroke="#686868" stroke-width="1"/></svg>
<svg class="r" style="left:705px;top:581px;" width="13" height="16" viewBox="0 0 13 16"><path d="M1.5 14.5H11.5V5.6L6.5 1L1.5 5.6Z" fill="#2b2b2b" stroke="#686868" stroke-width="1"/><path d="M4 9.5H9" stroke="#686868" stroke-width="1"/></svg>
<svg class="r" style="left:705px;top:625px;" width="13" height="16" viewBox="0 0 13 16"><path d="M1.5 14.5H11.5V5.6L6.5 1L1.5 5.6Z" fill="#2b2b2b" stroke="#686868" stroke-width="1"/><path d="M4 9.5H9" stroke="#686868" stroke-width="1"/></svg>
<svg class="r" style="left:705px;top:207px;" width="13" height="16" viewBox="0 0 13 16"><path d="M1.5 14.5H11.5V5.6L6.5 1L1.5 5.6Z" fill="#2b2b2b" stroke="#686868" stroke-width="1"/><path d="M4 9.5H9" stroke="#686868" stroke-width="1"/></svg>
<div class="r" style="left:749px;top:139px;width:1px;height:22px;background:#373737;"></div>
<div class="r" style="left:749px;top:205px;width:1px;height:22px;background:#373737;"></div>
<div class="r" style="left:749px;top:293px;width:1px;height:88px;background:#373737;"></div>
<div class="r" style="left:749px;top:535px;width:1px;height:66px;background:#373737;"></div>
<div class="r" style="left:763px;top:557px;width:1px;height:44px;background:#373737;"></div>
<div class="r" style="left:749px;top:623px;width:1px;height:22px;background:#373737;"></div>
<div class="r" style="left:735px;top:799px;width:1px;height:88px;background:#373737;"></div>
<div class="r" style="left:647px;top:72px;width:1857px;height:806px;overflow:hidden">
<div class="r" style="left:233px;top:133px;width:104.5px;height:22px;background:#214283;"></div>
<div class="r" style="left:337.5px;top:133px;width:2px;height:22px;background:#bbbbbb;"></div>
<span class="ln" style="left:14.3px;top:3.0px;transform:scaleY(1.15731)">1</span>
<div class="cl" style="left:71.9px;top:3.0px;transform:scaleY(1.15731)"><span class="c"># Tomcat</span></div>
<span class="ln" style="left:14.3px;top:25.0px;transform:scaleY(1.15731)">2</span>
<div class="cl" style="left:71.9px;top:25.0px;transform:scaleY(1.15731)"><span class="k">server</span><span class="v">:</span></div>
<span class="ln" style="left:14.3px;top:47.0px;transform:scaleY(1.15731)">3</span>
<div class="cl" style="left:71.9px;top:47.0px;transform:scaleY(1.15731)"><span class="v">    </span><span class="k">tomcat</span><span class="v">:</span></div>
<span class="ln" style="left:14.3px;top:69.0px;transform:scaleY(1.15731)">4</span>
<div class="cl" style="left:71.9px;top:69.0px;transform:scaleY(1.15731)"><span class="v">        </span><span class="k">uri-encoding</span><span class="v">: UTF-8</span></div>
<span class="ln" style="left:14.3px;top:91.0px;transform:scaleY(1.15731)">5</span>
<div class="cl" style="left:71.9px;top:91.0px;transform:scaleY(1.15731)"><span class="v">    </span><span class="k">port</span><span class="v">: </span><span class="n">8080</span></div>
<span class="ln" style="left:14.3px;top:113.0px;transform:scaleY(1.15731)">6</span>
<div class="cl" style="left:71.9px;top:113.0px;transform:scaleY(1.15731)"><span class="v">    </span><span class="k">servlet</span><span class="v">:</span></div>
<span class="ln" style="color:#a4a3a3;left:14.3px;top:135.0px;transform:scaleY(1.15731)">7</span>
<div class="cl" style="left:71.9px;top:135.0px;transform:scaleY(1.15731)"><span class="v">        </span><span class="k">context-path</span><span class="v">: /springbootk8uc1</span></div>
<span class="ln" style="left:14.3px;top:157.0px;transform:scaleY(1.15731)">8</span>
<span class="ln" style="left:14.3px;top:179.0px;transform:scaleY(1.15731)">9</span>
<div class="cl" style="left:71.9px;top:179.0px;transform:scaleY(1.15731)"><span class="k">spring</span><span class="v">:</span></div>
<span class="ln" style="left:7.3px;top:201.0px;transform:scaleY(1.15731)">10</span>
<div class="cl" style="left:71.9px;top:201.0px;transform:scaleY(1.15731)"><span class="v">    </span><span class="k">datasource</span><span class="v">:</span></div>
<span class="ln" style="left:7.3px;top:223.0px;transform:scaleY(1.15731)">11</span>
<div class="cl" style="left:71.9px;top:223.0px;transform:scaleY(1.15731)"><span class="v">        </span><span class="k">driverClassName</span><span class="v">: </span><span class="r2">com.mysql.cj.jdbc.Driver</span></div>
<span class="ln" style="left:7.3px;top:245.0px;transform:scaleY(1.15731)">12</span>
<div class="cl" style="left:71.9px;top:245.0px;transform:scaleY(1.15731)"><span class="v">        </span><span class="k">url</span><span class="v">: jdbc:mysql://127.0.0.1:3306/springbootk8uc1?useUnicode=true&amp;characterEncoding=utf-8&amp;useJDBCCompliantTimezoneShift=true&amp;useLegacyDatetimeCode=false&amp;serverTimezone=GMT%2B8</span></div>
<span class="ln" style="left:7.3px;top:267.0px;transform:scaleY(1.15731)">13</span>
<div class="cl" style="left:71.9px;top:267.0px;transform:scaleY(1.15731)"><span class="v">        </span><span class="k">username</span><span class="v">: root</span></div>
<span class="ln" style="left:7.3px;top:289.0px;transform:scaleY(1.15731)">14</span>
<div class="cl" style="left:71.9px;top:289.0px;transform:scaleY(1.15731)"><span class="v">        </span><span class="k">password</span><span class="v">: root</span></div>
<span class="ln" style="left:7.3px;top:311.0px;transform:scaleY(1.15731)">15</span>
<span class="ln" style="left:7.3px;top:333.0px;transform:scaleY(1.15731)">16</span>
<div class="cl" style="left:71.9px;top:333.0px;transform:scaleY(1.15731)"><span class="c">#        driverClassName: com.microsoft.sqlserver.jdbc.SQLServerDriver</span></div>
<span class="ln" style="left:7.3px;top:355.0px;transform:scaleY(1.15731)">17</span>
<div class="cl" style="left:71.9px;top:355.0px;transform:scaleY(1.15731)"><span class="c">#        url: jdbc:sqlserver://127.0.0.1:1433;DatabaseName=springbootk8uc1</span></div>
<span class="ln" style="left:7.3px;top:377.0px;transform:scaleY(1.15731)">18</span>
<div class="cl" style="left:71.9px;top:377.0px;transform:scaleY(1.15731)"><span class="c">#        username: sa</span></div>
<span class="ln" style="left:7.3px;top:399.0px;transform:scaleY(1.15731)">19</span>
<div class="cl" style="left:71.9px;top:399.0px;transform:scaleY(1.15731)"><span class="c">#        password: 123456</span></div>
<span class="ln" style="left:7.3px;top:421.0px;transform:scaleY(1.15731)">20</span>
<span class="ln" style="left:7.3px;top:443.0px;transform:scaleY(1.15731)">21</span>
<div class="cl" style="left:71.9px;top:443.0px;transform:scaleY(1.15731)"><span class="v">    </span><span class="k">servlet</span><span class="v">:</span></div>
<span class="ln" style="left:7.3px;top:465.0px;transform:scaleY(1.15731)">22</span>
<div class="cl" style="left:71.9px;top:465.0px;transform:scaleY(1.15731)"><span class="v">      </span><span class="k">multipart</span><span class="v">:</span></div>
<span class="ln" style="left:7.3px;top:487.0px;transform:scaleY(1.15731)">23</span>
<div class="cl" style="left:71.9px;top:487.0px;transform:scaleY(1.15731)"><span class="v">        </span><span class="k">max-file-size</span><span class="v">: 10MB</span></div>
<span class="ln" style="left:7.3px;top:509.0px;transform:scaleY(1.15731)">24</span>
<div class="cl" style="left:71.9px;top:509.0px;transform:scaleY(1.15731)"><span class="v">        </span><span class="k">max-request-size</span><span class="v">: 10MB</span></div>
<span class="ln" style="left:7.3px;top:531.0px;transform:scaleY(1.15731)">25</span>
<div class="cl" style="left:71.9px;top:531.0px;transform:scaleY(1.15731)"><span class="v">    </span><span class="k">resources</span><span class="v">:</span></div>
<span class="ln" style="left:7.3px;top:553.0px;transform:scaleY(1.15731)">26</span>
<div class="cl" style="left:71.9px;top:553.0px;transform:scaleY(1.15731)"><span class="v">      </span><span class="k">static-locations</span><span class="v">: classpath:static/,file:static/</span></div>
<span class="ln" style="left:7.3px;top:575.0px;transform:scaleY(1.15731)">27</span>
<span class="ln" style="left:7.3px;top:597.0px;transform:scaleY(1.15731)">28</span>
<div class="cl" style="left:71.9px;top:597.0px;transform:scaleY(1.15731)"><span class="c">#mybatis</span></div>
<span class="ln" style="left:7.3px;top:619.0px;transform:scaleY(1.15731)">29</span>
<div class="cl" style="left:71.9px;top:619.0px;transform:scaleY(1.15731)"><span class="k">mybatis-plus</span><span class="v">:</span></div>
<span class="ln" style="left:7.3px;top:641.0px;transform:scaleY(1.15731)">30</span>
<div class="cl" style="left:71.9px;top:641.0px;transform:scaleY(1.15731)"><span class="v">  </span><span class="k">mapper-locations</span><span class="v">: classpath*:mapper/*.xml</span></div>
<span class="ln" style="left:7.3px;top:663.0px;transform:scaleY(1.15731)">31</span>
<div class="cl" style="left:71.9px;top:663.0px;transform:scaleY(1.15731)"><span class="c">  #              package                  </span></div>
<span class="ln" style="left:7.3px;top:685.0px;transform:scaleY(1.15731)">32</span>
<div class="cl" style="left:71.9px;top:685.0px;transform:scaleY(1.15731)"><span class="v">  </span><span class="k">typeAliasesPackage</span><span class="v">: com.entity</span></div>
<span class="ln" style="left:7.3px;top:707.0px;transform:scaleY(1.15731)">33</span>
<div class="cl" style="left:71.9px;top:707.0px;transform:scaleY(1.15731)"><span class="v">  </span><span class="k">global-config</span><span class="v">:</span></div>
<span class="ln" style="left:7.3px;top:729.0px;transform:scaleY(1.15731)">34</span>
<div class="cl" style="left:71.9px;top:729.0px;transform:scaleY(1.15731)"><span class="c">    #          0:"      ID    ", 1:"        ID",2:"        ID (            ID)", 3:"        ID UUID";</span></div>
<span class="ln" style="left:7.3px;top:751.0px;transform:scaleY(1.15731)">35</span>
<div class="cl" style="left:71.9px;top:751.0px;transform:scaleY(1.15731)"><span class="v">    </span><span class="k">id-type</span><span class="v">: </span><span class="n">1</span></div>
<span class="ln" style="left:7.3px;top:773.0px;transform:scaleY(1.15731)">36</span>
<div class="cl" style="left:71.9px;top:773.0px;transform:scaleY(1.15731)"><span class="c">    #         0:"        ",1:"   NULL     "),2:"        "</span></div>
<span class="ln" style="left:7.3px;top:795.0px;transform:scaleY(1.15731)">37</span>
<div class="cl" style="left:71.9px;top:795.0px;transform:scaleY(1.15731)"><span class="v">    </span><span class="k">field-strategy</span><span class="v">: </span><span class="n">2</span></div>
<svg class="r" style="left:0;top:0" width="1857" height="806" fill="#629755" font-size="14" font-family="&quot;Liberation Mono&quot;, &quot;Noto Sans CJK SC&quot;, monospace"><text y="678.5" x="92.9 106.9 120.9 134.9 148.9 162.9 176.9">实体扫描，多个</text><text y="678.5" x="239.9 253.9 267.9 281.9 295.9 309.9 323.9 337.9 351.9">用逗号或者分号分隔</text><text y="744.5" x="106.9 120.9 134.9 148.9">主键类型</text><text y="744.5" x="197.9 211.9 225.9">数据库</text><text y="744.5" x="253.9 267.9">自增</text><text y="744.5" x="323.9 337.9 351.9 365.9">用户输入</text><text y="744.5" x="428.9 442.9 456.9 470.9">全局唯一</text><text y="744.5" x="512.9 526.9 540.9 554.9 568.9 582.9">数字类型唯一</text><text y="744.5" x="659.9 673.9 687.9 701.9">全局唯一</text><text y="788.5" x="106.9 120.9 134.9 148.9">字段策略</text><text y="788.5" x="190.9 204.9 218.9 232.9">忽略判断</text><text y="788.5" x="281.9">非</text><text y="788.5" x="337.9 351.9">判断</text><text y="788.5" x="407.9 421.9 435.9 449.9">非空判断</text></svg>
<svg class="r" style="left:351.9px;top:348px" width="63" height="3"><path d="M0 1.5L1 0.5L3 2.5L5 0.5L7 2.5L9 0.5L11 2.5L13 0.5L15 2.5L17 0.5L19 2.5L21 0.5L23 2.5L25 0.5L27 2.5L29 0.5L31 2.5L33 0.5L35 2.5L37 0.5L39 2.5L41 0.5L43 2.5L45 0.5L47 2.5L49 0.5L51 2.5L53 0.5L55 2.5L57 0.5L59 2.5L61 0.5" fill="none" stroke="#5d7a58" stroke-width="0.8"/></svg>
<svg class="r" style="left:204.89999999999998px;top:370px" width="63" height="3"><path d="M0 1.5L1 0.5L3 2.5L5 0.5L7 2.5L9 0.5L11 2.5L13 0.5L15 2.5L17 0.5L19 2.5L21 0.5L23 2.5L25 0.5L27 2.5L29 0.5L31 2.5L33 0.5L35 2.5L37 0.5L39 2.5L41 0.5L43 2.5L45 0.5L47 2.5L49 0.5L51 2.5L53 0.5L55 2.5L57 0.5L59 2.5L61 0.5" fill="none" stroke="#5d7a58" stroke-width="0.8"/></svg>
<svg class="r" style="left:484.9000000000001px;top:370px" width="77" height="3"><path d="M0 1.5L1 0.5L3 2.5L5 0.5L7 2.5L9 0.5L11 2.5L13 0.5L15 2.5L17 0.5L19 2.5L21 0.5L23 2.5L25 0.5L27 2.5L29 0.5L31 2.5L33 0.5L35 2.5L37 0.5L39 2.5L41 0.5L43 2.5L45 0.5L47 2.5L49 0.5L51 2.5L53 0.5L55 2.5L57 0.5L59 2.5L61 0.5L63 2.5L65 0.5L67 2.5L69 0.5L71 2.5L73 0.5L75 2.5" fill="none" stroke="#5d7a58" stroke-width="0.8"/></svg>
</div>
<svg class="r" style="left:1132px;top:621px;" width="9" height="17" viewBox="0 0 9 17"><path d="M0.5 0.5H3.5L4.5 1.5L5.5 0.5H8.5M0.5 16.5H3.5L4.5 15.5L5.5 16.5H8.5M4.5 1.5V15.5" fill="none" stroke="#d8d8d8" stroke-width="1"/></svg>
<div class="r" style="left:647px;top:878px;width:1857px;height:24px;background:#313335;"></div>
<div class="r" style="left:647px;top:877px;width:1857px;height:1px;background:#3b3b3b;"></div>
<span class="t" style="left:721.00px;top:881px;font-size:13px;line-height:17px;color:#bbbbbb;letter-spacing:0.005px;">Document 1/1</span>
<div class="r" style="left:816px;top:888px;width:1px;height:1px;background:#666;"></div>
<div class="r" style="left:816px;top:891px;width:1px;height:1px;background:#666;"></div>
<div class="r" style="left:15px;top:902px;width:2489px;height:420px;background:#3c3f41;"></div>
<div class="r" style="left:15px;top:926px;width:2489px;height:1px;background:#323232;"></div>
<span class="t" style="left:22.40px;top:906px;font-size:13px;line-height:17px;color:#bbbbbb;letter-spacing:-0.717px;">Run:</span>
<div class="r" style="left:54px;top:902px;width:234px;height:24px;background:#36393b;"></div>
<svg class="r" style="left:66.5px;top:906px;" width="16" height="16" viewBox="0 0 16 16"><path d="M15.3 0.8C12 3 7.2 2.4 4.3 3.8C2.2 5 1.1 7.2 1.2 9.4L1.2 12.5L2.2 13.7C2.9 12.6 3.5 12.4 4.5 12.6C7.2 13.5 10.2 13.4 12.2 12C15 10 16.1 5 15.3 0.8Z" fill="#66b04b"/><path d="M11.30 5.90L16.06 8.65L16.06 14.15L11.30 16.90L6.54 14.15L6.54 8.65Z" fill="#36393b"/><path d="M11.30 6.90L15.20 9.15L15.20 13.65L11.30 15.90L7.40 13.65L7.40 9.15Z" fill="#b4bec6"/><path d="M9.8 9.9A2.2 2.2 0 1 0 12.8 9.9" fill="none" stroke="#434a50" stroke-width="1.1"/><path d="M11.3 8.7V11.6" stroke="#434a50" stroke-width="1.1"/><circle cx="14" cy="14.2" r="1.8" fill="#4ff04a"/></svg>
<span class="t" style="left:86.60px;top:906px;font-size:13px;line-height:17px;color:#bbbbbb;letter-spacing:0.045px;">SpringbootSchemaApplication</span>
<svg class="r" style="left:268px;top:910px;" width="9" height="9" viewBox="0 0 9 9"><path d="M1 1L8 8M8 1L1 8" stroke="#7d7f82" stroke-width="1.1"/></svg>
<svg class="r" style="left:2483px;top:907px;" width="16" height="16" viewBox="0 0 16 16"><path d="M6.6 0.6H9.4L9.8 2.7L11.3 3.5L13.3 2.6L14.8 5L13.1 6.4V8.6L14.8 10L13.3 12.4L11.3 11.5L9.8 12.3L9.4 14.4H6.6L6.2 12.3L4.7 11.5L2.7 12.4L1.2 10L2.9 8.6V6.4L1.2 5L2.7 2.6L4.7 3.5L6.2 2.7Z" fill="#afb1b3"/><circle cx="8" cy="7.5" r="2.4" fill="#3c3f41"/></svg>
<div class="r" style="left:43px;top:927px;width:1px;height:395px;background:#494b4d;"></div>
<div class="r" style="left:44px;top:927px;width:70px;height:27px;background:#4e5254;"></div>
<div class="r" style="left:44px;top:954px;width:2460px;height:4px;background:#4d5052;"></div>
<div class="r" style="left:72px;top:958px;width:2432px;height:364px;background:#2b2b2b;"></div>
<div class="r" style="left:194px;top:929px;width:1px;height:23px;background:#47494b;"></div>
<svg class="r" style="left:50px;top:935px;" width="13" height="11" viewBox="0 0 13 11"><rect width="12.4" height="10.4" fill="#afb1b3"/><path d="M3.4 2.4L6.8 5.2L3.4 8" fill="none" stroke="#3c3f41" stroke-width="1.5"/></svg>
<span class="t" style="left:67.30px;top:932px;font-size:12px;line-height:16px;color:#bbbbbb;letter-spacing:-0.290px;">Console</span>
<svg class="r" style="left:118px;top:933px;" width="17" height="14" viewBox="0 0 17 14"><path d="M2.6 11L7.6 2.4L13.2 11" fill="none" stroke="#f0913a" stroke-width="1.9"/><circle cx="7.7" cy="2.6" r="2.3" fill="#f0913a"/><circle cx="2.7" cy="11.2" r="2.3" fill="#f0913a"/><circle cx="13.3" cy="11.2" r="2.3" fill="#f0913a"/></svg>
<span class="t" style="left:137.40px;top:932px;font-size:12px;line-height:16px;color:#bbbbbb;letter-spacing:-0.086px;">Endpoints</span>
<svg class="r" style="left:21px;top:934px;" width="16" height="16" viewBox="0 0 16 16"><path d="M10.2 0.8L15 4.6L10.2 8.4V5.9C7 5.7 4.6 7.4 4.6 10.2C4.6 12 5.6 13.3 7 14L5.8 15.6C3.6 14.6 2.2 12.7 2.2 10.2C2.2 6.2 5.6 3.4 10.2 3.4Z" fill="#59a869"/><rect x="9.2" y="10.2" width="5.6" height="5.6" fill="#afb1b3"/></svg>
<div class="r" style="left:24px;top:963px;width:10px;height:10px;background:#db5860;"></div>
<div class="r" style="left:25px;top:988px;width:3px;height:11px;background:#afb1b3;"></div>
<div class="r" style="left:30px;top:988px;width:3px;height:11px;background:#afb1b3;"></div>
<svg class="r" style="left:21px;top:1013px;" width="16" height="14" viewBox="0 0 16 14"><path d="M0.5 3H4.2L5.4 1H10.6L11.8 3H15.5V13H0.5Z" fill="#afb1b3"/><circle cx="8" cy="7.8" r="3.2" fill="#3c3f41"/><circle cx="8" cy="7.8" r="1.7" fill="#afb1b3"/></svg>
<svg class="r" style="left:21px;top:1038px;" width="17" height="17" viewBox="0 0 17 17"><ellipse cx="6.4" cy="8" rx="3.3" ry="4.2" fill="#59a869"/><path d="M4 3.6A2.5 2.5 0 0 1 8.8 3.6Z" fill="#59a869"/><path d="M0.6 4.4L3.4 6M12 4.2L9.4 6M0.2 8.4H3M0.8 12.6L3.4 10.6" stroke="#59a869" stroke-width="1.4" fill="none"/><path d="M8 9H16V17H8Z" fill="#3c3f41"/><path d="M9.4 16L14.6 10.8M10.6 10.2H15.2V14.8" fill="none" stroke="#afb1b3" stroke-width="1.8"/></svg>
<svg class="r" style="left:20px;top:1064px;" width="16" height="16" viewBox="0 0 16 16"><path d="M6.5 1H14.5V15H6.5V11.6M6.5 4.4V1" fill="none" stroke="#afb1b3" stroke-width="1.6"/><path d="M0.4 8H9.2M6 4.6L9.6 8L6 11.4" fill="none" stroke="#db5860" stroke-width="1.7"/></svg>
<div class="r" style="left:19px;top:1089px;width:20px;height:1px;background:#515355;"></div>
<div class="r" style="left:23px;top:1100px;width:6px;height:4px;background:#afb1b3;"></div>
<div class="r" style="left:30px;top:1100px;width:6px;height:4px;background:#afb1b3;"></div>
<div class="r" style="left:23px;top:1105px;width:13px;height:5px;background:#afb1b3;"></div>
<div class="r" style="left:19px;top:1122px;width:20px;height:1px;background:#515355;"></div>
<svg class="r" style="left:21px;top:1130px;" width="16" height="16" viewBox="0 0 16 16"><path d="M8.4 1.2L14.6 7.2L11.4 7.6L8.8 10.2L8.2 12.6L3.2 7.6L5.6 7L8.2 4.4Z" fill="#afb1b3"/><path d="M5.6 10.2L0.8 15.2" stroke="#afb1b3" stroke-width="1.6"/></svg>
<svg class="r" style="left:52px;top:966px;" width="12" height="14" viewBox="0 0 12 14"><path d="M6 13.5V1.5M1.2 6.2L6 1.4L10.8 6.2" fill="none" stroke="#5a5d60" stroke-width="1.5"/></svg>
<svg class="r" style="left:52px;top:992px;" width="12" height="14" viewBox="0 0 12 14"><path d="M6 0.5V12.5M1.2 7.8L6 12.6L10.8 7.8" fill="none" stroke="#5a5d60" stroke-width="1.5"/></svg>
<svg class="r" style="left:51px;top:1018px;" width="14" height="15" viewBox="0 0 14 15"><path d="M0.6 1.6H12.4M0.6 6H10.2A2.6 2.6 0 0 1 10.2 11.4H6.4M0.6 11.4H3.2" fill="none" stroke="#afb1b3" stroke-width="1.5"/><path d="M8.6 8.6L5.6 11.4L8.6 14.2" fill="none" stroke="#afb1b3" stroke-width="1.5"/></svg>
<div class="r" style="left:47px;top:1040px;width:22px;height:22px;background:#4e5254;border-radius:3px"></div>
<svg class="r" style="left:51px;top:1043px;" width="14" height="15" viewBox="0 0 14 15"><path d="M0.6 3.6H5M0.6 7.6H5M0.6 12.6H13.2" fill="none" stroke="#afb1b3" stroke-width="1.7"/><path d="M9.4 0.4V9M6 5.8L9.4 9.4L12.8 5.8" fill="none" stroke="#afb1b3" stroke-width="1.6"/></svg>
<svg class="r" style="left:51px;top:1070px;" width="14" height="14" viewBox="0 0 14 14"><rect x="3" y="0.6" width="8" height="2.6" fill="#afb1b3"/><path d="M0.6 4.4H13.4V10.4H11V8H3V10.4H0.6Z" fill="#afb1b3"/><rect x="3.8" y="9.2" width="6.4" height="3.6" fill="none" stroke="#afb1b3" stroke-width="1.3"/></svg>
<svg class="r" style="left:52px;top:1095px;" width="12" height="15" viewBox="0 0 12 15"><path d="M0.6 2.6H11.4M3.8 2.4V0.8H8.2V2.4" fill="none" stroke="#5a5d60" stroke-width="1.3"/><path d="M1.6 4.2H10.4V14H1.6Z" fill="#5a5d60"/></svg>
<div class="r" style="left:0px;top:1321px;width:2504px;height:7px;background:#3c3f41;"></div>
<div class="r" style="left:0px;top:1321px;width:2504px;height:1px;background:#4a4c4e;"></div>
<div class="r" style="left:117px;top:1322px;width:70px;height:6px;background:#2f3133;"></div>
<div class="r" style="left:2333px;top:650px;width:171px;height:26px;background:#ffffff;"></div>
<svg class="r" style="left:2306px;top:643px" width="38" height="36" viewBox="0 0 38 36"><path d="M5 7L26.6 3.3Q28.8 3 29.3 5L34 26.2Q34.4 28.4 32.2 28.9L11 32.6Q8.8 33 8.3 30.9L2.9 9.6Q2.5 7.5 5 7Z" fill="#f05a22"/><path d="M26.4 9.6C21.6 7.6 12.2 8.6 9.6 12.6C7.6 16.2 12.6 17.8 18.4 17.6C24.6 17.4 26.2 18.8 24.4 20.8C22 23.2 14.2 24 9.8 21.8L10.4 26C15.8 28.2 26.6 27.2 29.4 22.6C31.6 18.6 27 16.6 20.6 16.8C14.8 17 13.4 15.8 15 14C17 12.2 22.6 12 26.8 13.4Z" fill="#ffffff"/></svg>
<svg class="r" style="left:2373px;top:656px;" width="12" height="14" viewBox="0 0 12 14"><circle cx="2.2" cy="4.2" r="1.7" fill="#1a6cc7"/><path d="M8 8.2Q10.8 8 10.6 10.4Q10.4 12.4 8.2 13.4L7.6 12.6Q9 11.8 8.8 11.2Q7 11 7 9.6Q7 8.4 8 8.2Z" fill="#1a6cc7"/></svg>
<svg class="r" style="left:2396px;top:654px;" width="13" height="18" viewBox="0 0 13 18"><rect x="3.6" y="0.6" width="5.8" height="10" rx="2.9" fill="#1a6cc7"/><path d="M0.8 7.4Q0.8 13 6.5 13Q12.2 13 12.2 7.4" fill="none" stroke="#1a6cc7" stroke-width="1.3"/><rect x="4.6" y="15" width="3.8" height="1.6" rx="0.6" fill="#1a6cc7"/></svg>
<svg class="r" style="left:2418px;top:657px;" width="17" height="13" viewBox="0 0 17 13"><rect x="0.6" y="0.4" width="14.6" height="11.4" rx="2" fill="#1a6cc7"/><rect x="2.4" y="2.4" width="1.9" height="1.7" fill="#fff"/><rect x="2.4" y="5.1" width="1.9" height="1.7" fill="#fff"/><rect x="5.3" y="2.4" width="1.9" height="1.7" fill="#fff"/><rect x="5.3" y="5.1" width="1.9" height="1.7" fill="#fff"/><rect x="8.2" y="2.4" width="1.9" height="1.7" fill="#fff"/><rect x="8.2" y="5.1" width="1.9" height="1.7" fill="#fff"/><rect x="11.1" y="2.4" width="1.9" height="1.7" fill="#fff"/><rect x="11.1" y="5.1" width="1.9" height="1.7" fill="#fff"/><rect x="2.4" y="7.9" width="1.9" height="1.7" fill="#fff"/><rect x="5.3" y="7.9" width="7.7" height="1.7" fill="#fff"/></svg>
<svg class="r" style="left:2442px;top:651px;" width="20" height="21" viewBox="0 0 20 21"><defs><linearGradient id="sg" x1="0" y1="0" x2="0.3" y2="1"><stop offset="0" stop-color="#f0564a"/><stop offset="0.55" stop-color="#b760d8"/><stop offset="1" stop-color="#6fa2ff"/></linearGradient></defs><path d="M0.6 8L4.6 6.2Q7.6 8.4 10.6 6.2L14.6 8L13.6 11.4L11.8 10.8V18.4H3.4V10.8L1.6 11.4Z" fill="url(#sg)"/><circle cx="15.6" cy="3.2" r="2.6" fill="#f0564a"/></svg>
<svg class="r" style="left:2466px;top:656px;" width="17" height="14" viewBox="0 0 17 14"><path d="M4.4 0.8H12.2Q15.8 0.8 15.8 4.6V8.2H0.8V4.6Q0.8 0.8 4.4 0.8Z" fill="#1a6cc7"/><path d="M0.8 9.4Q0.6 13.2 3.2 13.2Q4.6 13 5.4 10.6H11.2Q12 13 13.4 13.2Q16 13.2 15.8 9.4Z" fill="#1a6cc7"/><path d="M3.2 4.6H7M5.1 2.7V6.5" stroke="#fff" stroke-width="1.2"/><circle cx="11.2" cy="3.4" r="1" fill="#fff"/><circle cx="13.2" cy="5.6" r="1" fill="#fff"/></svg>
<svg class="r" style="left:2491px;top:656px;" width="13" height="14" viewBox="0 0 13 14"><rect x="0.6" y="0.6" width="5.8" height="5.8" rx="1.6" fill="#1a6cc7"/><rect x="7.6" y="0.6" width="5.8" height="5.8" rx="1.6" fill="#1a6cc7"/><rect x="0.6" y="7.6" width="5.8" height="5.8" rx="1.6" fill="#1a6cc7"/><rect x="7.6" y="7.6" width="5.8" height="5.8" rx="1.6" fill="#1a6cc7"/></svg>
<svg class="r" style="left:2345.8px;top:654.9px" width="16.5" height="17.5"><text x="0" y="13.64" font-size="15.5" font-weight="700" fill="#1a6cc7" font-family="&quot;Liberation Sans&quot;, &quot;Noto Sans CJK SC&quot;, sans-serif">英</text></svg>
</div></body></html>
